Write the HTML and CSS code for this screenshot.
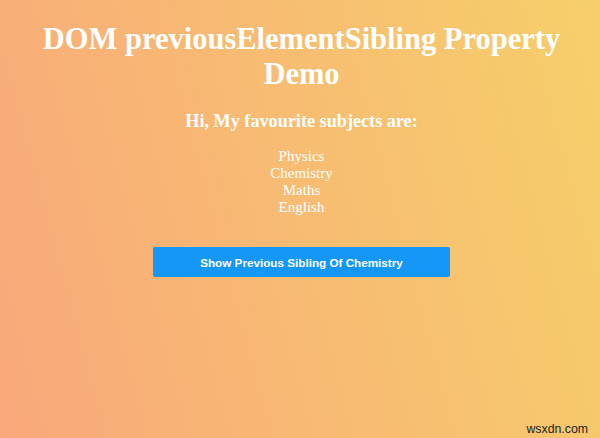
FILE: index.html
```html
<!DOCTYPE html>
<html>
<head>
<meta charset="utf-8">
<link rel="stylesheet" href="styles.css">
</head>
<body>
<main class="page">
  <h1 class="title">DOM previousElementSibling Property Demo</h1>
  <h2 class="subtitle">Hi, My favourite subjects are:</h2>
  <ul class="subjects">
    <li>Physics</li>
    <li>Chemistry</li>
    <li>Maths</li>
    <li>English</li>
  </ul>
  <button class="btn">Show Previous Sibling Of Chemistry</button>
</main>
<div class="watermark">wsxdn.com</div>
</body>
</html>
```
FILE: styles.css
```css
html, body {
  margin: 0;
  height: 100%;
}
body {
  background: linear-gradient(75deg, #f9a87b 0%, #f6cf6a 100%);
  font-family: "Liberation Serif", "Times New Roman", serif;
  color: #fff;
  position: relative;
  overflow: hidden;
}
.page {
  display: flex;
  flex-direction: column;
  align-items: center;
  text-align: center;
  padding-top: 22px;
  padding-left: 3px;
}
.title {
  margin: 0;
  font-size: 30.5px;
  line-height: 35px;
  font-weight: bold;
  width: 560px;
}
.subtitle {
  margin: 18px 0 0;
  font-size: 18.2px;
  line-height: 22px;
  font-weight: bold;
}
.subjects {
  list-style: none;
  margin: 16px 0 0;
  padding: 0;
  font-size: 15px;
  line-height: 17px;
}
.btn {
  margin-top: 31px;
  width: 297px;
  height: 30px;
  border: none;
  border-radius: 2px;
  background: #1497f7;
  color: #fff;
  font-family: "Liberation Sans", Arial, sans-serif;
  font-weight: bold;
  font-size: 11.7px;
  padding: 0;
}
.watermark {
  position: absolute;
  right: 12px;
  bottom: 2px;
  font-family: "Liberation Sans", Arial, sans-serif;
  font-size: 12.3px;
  color: #222;
}
```
